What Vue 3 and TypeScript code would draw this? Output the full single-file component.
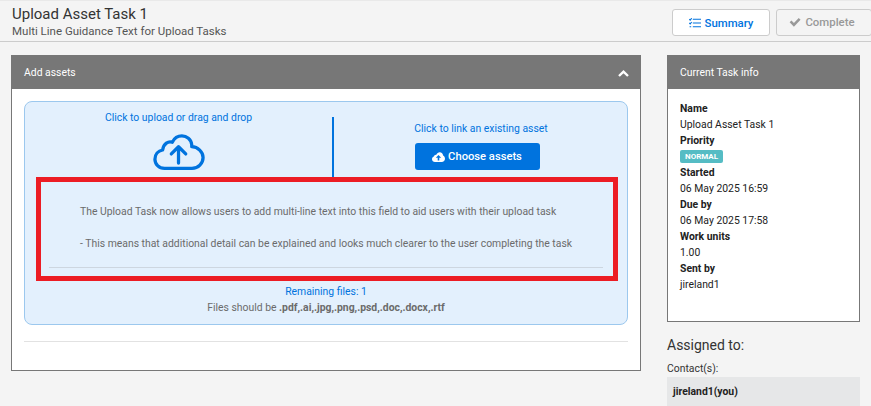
<script setup lang="ts">
interface InfoRow { label: string; value?: string; badge?: string }
const info: InfoRow[] = [
  { label: 'Name', value: 'Upload Asset Task 1' },
  { label: 'Priority', badge: 'NORMAL' },
  { label: 'Started', value: '06 May 2025 16:59' },
  { label: 'Due by', value: '06 May 2025 17:58' },
  { label: 'Work units', value: '1.00' },
  { label: 'Sent by', value: 'jireland1' },
]
</script>

<template>
  <div class="page">
    <header class="topbar">
      <div class="titles">
        <h1>Upload Asset Task 1</h1>
        <p>Multi Line Guidance Text for Upload Tasks</p>
      </div>
      <div class="actions">
        <button class="btn summary" type="button">
          <svg width="12" height="10" viewBox="0 0 12 10" fill="none" stroke="#0073de" stroke-width="1.1">
            <path d="M3.800 1.200H12M3.800 5H12M3.800 8.800H12" />
            <path d="M0.300 1.200l.9.9 1.500-1.900M0.300 5l.9.9 1.500-1.900M0.600 8.800h1.600" />
          </svg>
          Summary
        </button>
        <button class="btn complete" type="button">
          <svg class="complete-icon" width="12" height="10" viewBox="0 0 13 11">
            <path d="M0.600 5.800l2-2 2.700 2.700L10.600 1l2 2-7.300 7.600z" fill="#999" />
          </svg>
          <span class="complete-label">Complete</span>
        </button>
      </div>
    </header>

    <main class="content">
      <section class="panel main-panel">
        <div class="panel-head">
          <span>Add assets</span>
          <svg class="chev" width="11" height="7" viewBox="0 0 11 7" fill="none" stroke="#fff" stroke-width="2.4">
            <path d="M1 6l4.500-4.300L10 6" />
          </svg>
        </div>
        <div class="main-body">
          <div class="drop">
            <div class="drop-top">
              <div class="col upload">
                <span class="link">Click to upload or drag and drop</span>
                <svg class="cloud" width="52" height="37" viewBox="0 0 54 38" fill="none" stroke="#0073de" stroke-width="3.4" stroke-linejoin="round" stroke-linecap="round">
                  <path d="M13 35.500H12C6 35.500 2 31 2 26c0-5 3.400-8.800 8-9.600C11 9.600 16 7 20 8.400 22.200 4 26 1.800 30 1.800c5 0 9.600 3.400 10.200 9 .1.800.1 1.400 0 2.200 6.400.2 11.800 5.400 11.800 11.200 0 6-5 11.300-11.500 11.300z" />
                  <path d="M26.500 30V13M19 20.500l7.500-7.500 7.500 7.500" />
                </svg>
              </div>
              <div class="col link-col">
                <span class="link">Click to link an existing asset</span>
                <button class="choose" type="button">
                  <svg width="13" height="10" viewBox="0 0 13 10">
                    <path fill="#fff" fill-rule="evenodd" d="M3 10C1.300 10 0 8.700 0 7.200c0-1.300.8-2.300 2-2.600C2.100 3.400 3.200 2.600 4.300 2.800 5 1.200 6.300.3 7.700.3c1.900 0 3.300 1.400 3.400 3.200C12.200 4 13 5.200 13 6.700 13 8.600 11.500 10 9.800 10zM6.500 3L3.800 5.800h1.900V8.500h1.600V5.800h1.900z" />
                  </svg>
                  Choose assets
                </button>
              </div>
            </div>
            <div class="guidance">
              <p>The Upload Task now allows users to add multi-line text into this field to aid users with their upload task</p>
              <p>- This means that additional detail can be explained and looks much clearer to the user completing the task</p>
              <hr />
            </div>
            <div class="remaining">Remaining files: 1</div>
            <div class="types">Files should be <b>.pdf,.ai,.jpg,.png,.psd,.doc,.docx,.rtf</b></div>
          </div>
          <hr class="rule" />
        </div>
      </section>

      <aside class="side">
        <section class="panel info-panel">
          <div class="panel-head">
            <span>Current Task info</span>
          </div>
          <dl class="info">
            <template v-for="row in info" :key="row.label">
              <dt>{{ row.label }}</dt>
              <dd>
                <span v-if="row.badge" class="badge">{{ row.badge }}</span>
                <template v-else>{{ row.value }}</template>
              </dd>
            </template>
          </dl>
        </section>
        <h2>Assigned to:</h2>
        <div class="contacts">Contact(s):</div>
        <div class="contact">jireland1(you)</div>
      </aside>
    </main>
  </div>
</template>

<style>
html, body { margin: 0; background: #f4f4f4; overflow: hidden; }
</style>

<style scoped>
.page {
  width: 871px;
  height: 406px;
  overflow: hidden;
  background: #f4f4f4;
  font-family: Roboto, "Liberation Sans", sans-serif;
  color: #222;
}
.topbar {
  box-sizing: border-box;
  height: 42px;
  border-top: 1px solid #e9e9e9;
  border-bottom: 1px solid #ccc;
  display: flex;
  justify-content: space-between;
  padding: 0 0 0 12px;
}
.titles h1 {
  margin: 4px 0 0;
  font-size: 15px;
  line-height: 19px;
  font-weight: 400;
  color: #333;
}
.titles p {
  margin: 0;
  font-size: 11.5px;
  line-height: 15px;
  color: #555;
}
.actions {
  display: flex;
  gap: 6px;
  margin-top: 8px;
  margin-right: -1px;
}
.btn {
  box-sizing: border-box;
  height: 27px;
  border-radius: 3px;
  font: 500 11.4px Roboto, sans-serif;
  display: flex;
  align-items: center;
  justify-content: center;
  gap: 4px;
  padding: 0;
}
.summary {
  width: 98px;
  background: #fff;
  border: 1px solid #ccc;
  color: #0073de;
}
.complete {
  width: 96px;
  padding-right: 4px;
  background: #f4f4f4;
  border: 1px solid #ccc;
  color: #999;
}
.complete-icon { margin-top: -2px; }
.complete-label { margin-top: -2px; }
.content {
  display: flex;
  align-items: flex-start;
  padding: 13px 11px 0;
  gap: 26px;
}
.panel {
  box-sizing: border-box;
  background: #fff;
  border: 1px solid #777;
  border-top: 0;
}
.panel-head {
  box-sizing: border-box;
  height: 34px;
  margin: 0 -1px;
  padding: 0 12px 0 13px;
  background: #777;
  color: #fff;
  font-size: 10.4px;
  font-weight: 400;
  display: flex;
  align-items: center;
  justify-content: space-between;
}
.main-panel {
  width: 630px;
  height: 316px;
}
.chev { margin-top: 2px; }
.main-body {
  padding: 12px 12px 0;
}
.drop {
  box-sizing: border-box;
  height: 224px;
  background: #e3f0fd;
  border: 1px solid #9cc8ee;
  border-radius: 8px;
  padding: 0 9px 0 11px;
  display: flex;
  flex-direction: column;
  align-items: stretch;
}
.drop-top {
  display: flex;
  height: 75px;
}
.col {
  display: flex;
  flex-direction: column;
  align-items: center;
}
.upload {
  box-sizing: border-box;
  width: 298px;
  height: 60px;
  margin-top: 15px;
  padding-right: 11px;
  border-right: 2px solid #0073de;
}
.upload .link { margin-top: -6px; }
.cloud { margin-top: 9px; }
.link-col {
  flex: 1;
  padding-top: 20px;
}
.link {
  font-size: 10.4px;
  line-height: 14px;
  color: #0073de;
}
.link-col .link { margin-left: 10px; }
.choose {
  box-sizing: border-box;
  width: 125px;
  height: 27px;
  margin-top: 7px;
  margin-left: 2px;
  background: #0073de;
  border: 0;
  border-radius: 3px;
  color: #fff;
  font: 500 11.2px Roboto, sans-serif;
  display: flex;
  align-items: center;
  justify-content: center;
  gap: 3px;
  padding: 0;
}
.guidance {
  box-sizing: border-box;
  height: 104px;
  border: 5px solid #ec1c24;
  padding: 0 10px 0 8px;
  font-size: 10.4px;
  color: #6b6b6b;
}
.guidance p {
  margin: 0;
  padding: 24px 0 0 31px;
  line-height: 11px;
  white-space: nowrap;
}
.guidance p + p { padding-top: 21px; }
.guidance hr {
  margin: 18px 0 0;
  border: 0;
  border-top: 1px solid #cdd6e0;
}
.remaining {
  margin-top: 4px;
  text-align: center;
  font-size: 10.4px;
  line-height: 14px;
  color: #0073de;
  margin-right: 2px;
}
.types {
  margin-top: 2px;
  text-align: center;
  font-size: 10.4px;
  line-height: 14px;
  color: #6b6b6b;
  margin-right: 2px;
}
.types b { font-weight: 700; }
.rule {
  margin: 16px 0 0;
  border: 0;
  border-top: 1px solid #e2e2e2;
}
.side {
  width: 193px;
}
.info-panel {
  height: 267px;
}
.info {
  margin: 0;
  padding: 12px 12px;
  font-size: 10.4px;
  line-height: 16px;
  color: #222;
}
.info dt { font-weight: 700; }
.info dd { margin: 0; }
.badge {
  display: inline-block;
  height: 13px;
  line-height: 13px;
  padding: 0 5px;
  border-radius: 2px;
  background: #55bcc4;
  color: #fff;
  font-size: 8px;
  font-weight: 700;
  vertical-align: 1px;
}
.side h2 {
  margin: 15px 0 0;
  font-size: 14px;
  line-height: 17px;
  font-weight: 400;
  color: #333;
}
.contacts {
  margin-top: 8px;
  font-size: 10.4px;
  line-height: 13px;
  color: #333;
}
.contact {
  box-sizing: border-box;
  height: 30px;
  margin-top: 2px;
  padding: 8px 6px;
  line-height: 13px;
  background: #e6e7e8;
  font-size: 10.4px;
  font-weight: 700;
  color: #222;
}
</style>
